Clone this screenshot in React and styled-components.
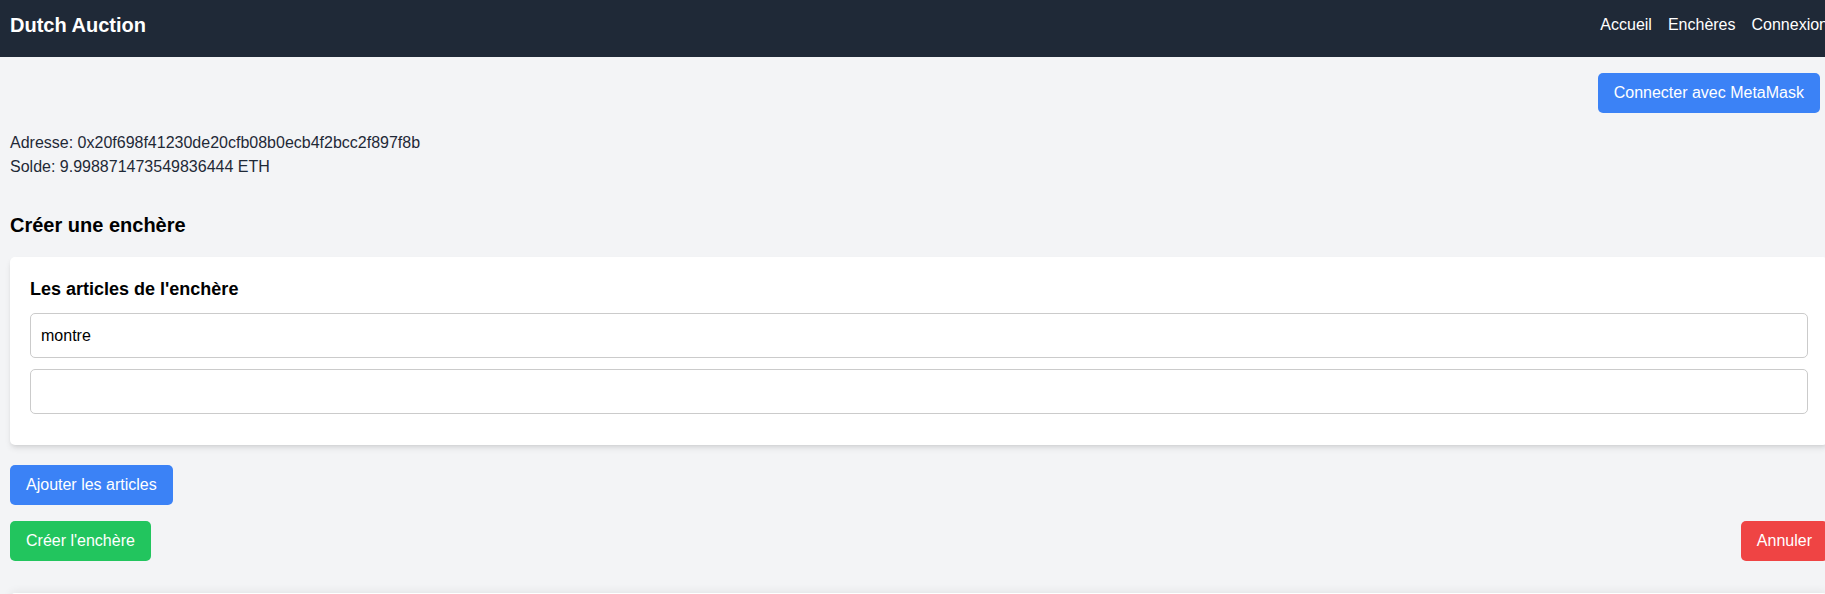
import styled, { createGlobalStyle } from "styled-components";

const GlobalStyle = createGlobalStyle`
  html, body {
    margin: 0;
    padding: 0;
    overflow-x: hidden;
    background-color: #f3f4f6;
    font-family: "Liberation Sans", Arial, sans-serif;
    color: #1f2937;
  }
  * {
    box-sizing: border-box;
  }
`;

const Page = styled.div`
  width: 1838px;
  min-height: 700px;
`;

const NavBar = styled.nav`
  display: flex;
  justify-content: space-between;
  align-items: center;
  height: 57px;
  padding: 0 10px;
  background-color: #1f2937;
  color: #ffffff;
`;

const Brand = styled.div`
  font-size: 20px;
  font-weight: 700;
  line-height: 28px;
  margin-top: -8px;
`;

const NavLinks = styled.div`
  display: flex;
  gap: 16px;
  margin-top: -8px;
`;

const NavLink = styled.a`
  color: #ffffff;
  text-decoration: none;
  font-size: 16px;
  line-height: 24px;
`;

const Main = styled.main`
  padding: 16px 10px 0;
`;

const TopBar = styled.div`
  display: flex;
  justify-content: flex-end;
  padding-right: 8px;
`;

const Button = styled.button`
  border: none;
  border-radius: 5px;
  padding: 8px 16px;
  height: 40px;
  font-family: inherit;
  font-size: 16px;
  line-height: 24px;
  color: #ffffff;
  background-color: ${(p) => p.$bg};
  cursor: pointer;
`;

const Info = styled.div`
  margin-top: 18px;
  font-size: 16px;
  line-height: 24px;
  color: #1f2937;
`;

const Title = styled.h2`
  margin: 32px 0 18px;
  font-size: 20px;
  line-height: 28px;
  font-weight: 700;
  color: #000000;
`;

const Card = styled.section`
  background-color: #ffffff;
  border-radius: 5px;
  padding: 20px 20px 20px;
  box-shadow: 0 4px 6px -1px rgba(0, 0, 0, 0.1), 0 2px 4px -2px rgba(0, 0, 0, 0.1);
`;

const CardTitle = styled.h3`
  margin: 0 0 12px;
  font-size: 18px;
  line-height: 24px;
  font-weight: 700;
  color: #000000;
`;

const TextInput = styled.input`
  display: block;
  width: 100%;
  height: 45px;
  margin-bottom: 11px;
  padding: 0 10px;
  border: 1px solid #cbcbcb;
  border-radius: 5px;
  font-family: inherit;
  font-size: 16px;
  color: #000000;
  background: #ffffff;
  outline: none;
`;

const AddRow = styled.div`
  margin-top: 20px;
`;

const ActionRow = styled.div`
  display: flex;
  justify-content: space-between;
  margin-top: 16px;
`;

const NextCard = styled.section`
  margin-top: 32px;
  height: 120px;
  background-color: #ffffff;
  border-radius: 5px;
  box-shadow: 0 4px 6px -1px rgba(0, 0, 0, 0.1), 0 -2px 8px rgba(0, 0, 0, 0.06);
`;

export default function App() {
  return (
    <>
      <GlobalStyle />
      <Page>
        <NavBar>
          <Brand>Dutch Auction</Brand>
          <NavLinks>
            <NavLink href="#">Accueil</NavLink>
            <NavLink href="#">Enchères</NavLink>
            <NavLink href="#">Connexion</NavLink>
          </NavLinks>
        </NavBar>
        <Main>
          <TopBar>
            <Button $bg="#3b82f6">Connecter avec MetaMask</Button>
          </TopBar>
          <Info>
            <div>Adresse: 0x20f698f41230de20cfb08b0ecb4f2bcc2f897f8b</div>
            <div>Solde: 9.998871473549836444 ETH</div>
          </Info>
          <Title>Créer une enchère</Title>
          <Card>
            <CardTitle>Les articles de l'enchère</CardTitle>
            <TextInput defaultValue="montre" />
            <TextInput defaultValue="" />
          </Card>
          <AddRow>
            <Button $bg="#3b82f6">Ajouter les articles</Button>
          </AddRow>
          <ActionRow>
            <Button $bg="#22c55e">Créer l'enchère</Button>
            <Button $bg="#ef4444">Annuler</Button>
          </ActionRow>
          <NextCard />
        </Main>
      </Page>
    </>
  );
}
